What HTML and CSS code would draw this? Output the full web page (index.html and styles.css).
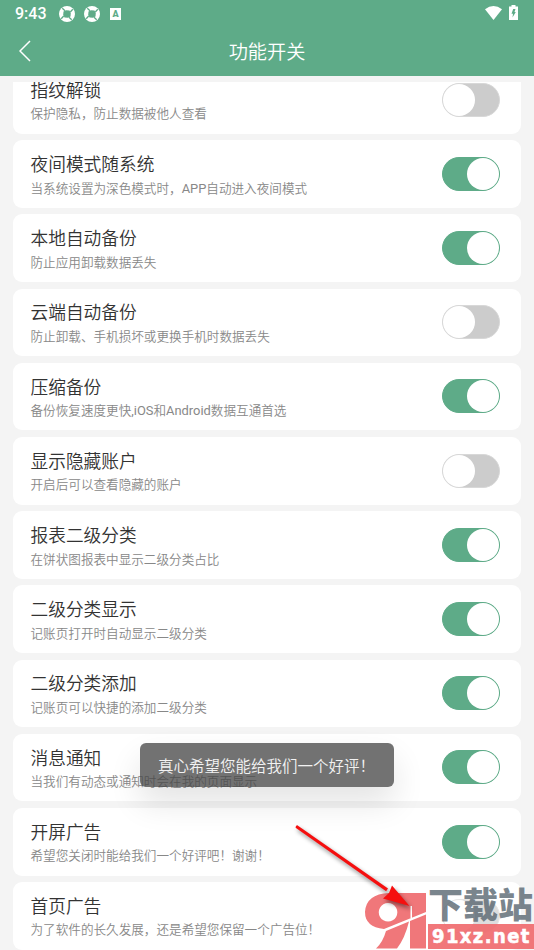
FILE: index.html
```html
<!DOCTYPE html>
<html lang="zh-CN">
<head>
<meta charset="utf-8">
<title>功能开关</title>
<link rel="stylesheet" href="styles.css">
</head>
<body>
<div class="screen">
  <header class="header">
    <div class="status">
      <span class="time">9:43</span>
      <svg class="ball" viewBox="0 0 16 16"><circle cx="8" cy="8" r="8" fill="#fff"/><path d="M7 4.200 10.500 4.500 11.800 7 11.500 10.500 9 11.800 5.500 11.500 4.200 9 4.500 5.500z" fill="#5eab88"/><path d="M3.300 2.200 6 4.700M13.800 3.300 11.300 6M12.700 13.800 10 11.300M2.200 12.700 4.700 10" stroke="#5eab88" stroke-width="1.300"/></svg>
      <svg class="ball" viewBox="0 0 16 16"><circle cx="8" cy="8" r="8" fill="#fff"/><path d="M7 4.200 10.500 4.500 11.800 7 11.500 10.500 9 11.800 5.500 11.500 4.200 9 4.500 5.500z" fill="#5eab88"/><path d="M3.300 2.200 6 4.700M13.800 3.300 11.300 6M12.700 13.800 10 11.300M2.200 12.700 4.700 10" stroke="#5eab88" stroke-width="1.300"/></svg>
      <span class="badge">A</span>
      <svg class="wifi" viewBox="0 0 17 14"><path d="M0 3.200Q8.500-3.200 17 3.200L8.500 14z" fill="#fff"/></svg>
      <svg class="battery" viewBox="0 0 9 15"><path d="M2.500 0h4v1.500H9V15H0V1.500h2.500z" fill="#fff"/><path d="M4.200 4h2.300L5.500 7h1.300L3.500 12.500 4 8.800H2.500z" fill="#5eab88"/></svg>
    </div>
    <div class="nav">
      <svg class="back" viewBox="0 0 12 22"><path d="M11 1 1 11l10 10" fill="none" stroke="#fff" stroke-width="1.500"/></svg>
      <h1>功能开关</h1>
    </div>
  </header>
  <main class="viewport">
    <div class="list">
      <section class="card"><div><h2>指纹解锁</h2><p>保护隐私，防止数据被他人查看</p></div><i class="switch"></i></section>
      <section class="card"><div><h2>夜间模式随系统</h2><p>当系统设置为深色模式时，<span class="latin">APP</span>自动进入夜间模式</p></div><i class="switch on"></i></section>
      <section class="card"><div><h2>本地自动备份</h2><p>防止应用卸载数据丢失</p></div><i class="switch on"></i></section>
      <section class="card"><div><h2>云端自动备份</h2><p>防止卸载、手机损坏或更换手机时数据丢失</p></div><i class="switch"></i></section>
      <section class="card"><div><h2>压缩备份</h2><p>备份恢复速度更快<span class="latin">,iOS</span>和<span class="latin">Android</span>数据互通首选</p></div><i class="switch on"></i></section>
      <section class="card"><div><h2>显示隐藏账户</h2><p>开启后可以查看隐藏的账户</p></div><i class="switch"></i></section>
      <section class="card"><div><h2>报表二级分类</h2><p>在饼状图报表中显示二级分类占比</p></div><i class="switch on"></i></section>
      <section class="card"><div><h2>二级分类显示</h2><p>记账页打开时自动显示二级分类</p></div><i class="switch on"></i></section>
      <section class="card"><div><h2>二级分类添加</h2><p>记账页可以快捷的添加二级分类</p></div><i class="switch on"></i></section>
      <section class="card"><div><h2>消息通知</h2><p>当我们有动态或通知时会在我的页面显示</p></div><i class="switch on"></i></section>
      <section class="card"><div><h2>开屏广告</h2><p>希望您关闭时能给我们一个好评吧！谢谢！</p></div><i class="switch on"></i></section>
      <section class="card"><div><h2>首页广告</h2><p>为了软件的长久发展，还是希望您保留一个广告位！</p></div><i class="switch faded"></i></section>
    </div>
  </main>
  <div class="toast">真心希望您能给我们一个好评！</div>
  <div class="watermark">
    <svg class="mark" viewBox="0 0 62 58">
      <path fill="#f0777a" fill-rule="evenodd" d="M25 1H62V20L20 37Q1 35 1 20 2 2 25 1zM24 11a9.300 9.300 0 1 0 .1 0z"/>
      <path d="M22 39 45 29.500Q41 46 33 56.500H12Q19 50 22 39zM46 29 62 22.500v34H46z" fill="#f0777a"/>
      <path d="M46.500 14h1.500v12h-1.500z" fill="#fff"/>
    </svg>
    <div class="site"><span class="name">下载站</span><span class="url">91xz.net</span></div>
  </div>
  <svg class="arrow" viewBox="0 0 130 100"><g fill="#f50f0f"><path d="M6.300 6.200 97 69.500l-1.900 2.700L4.600 8.700Q4.500 6 6.300 6.200z"/><path d="M101 66.500 118.500 87 92 79.500 98 74z"/></g></svg>
</div>
</body>
</html>
```
FILE: styles.css
```css
* { box-sizing: border-box; margin: 0; padding: 0; }
body {
  background: #f4f4f4;
  font-family: Roboto, "Noto Sans CJK SC", sans-serif;
  overflow: hidden;
}
.screen {
  position: relative;
  width: 534px;
  height: 950px;
  overflow: hidden;
  display: flex;
  flex-direction: column;
}
.header { height: 76px; background: #5eab88; color: #fff; flex: none; }
.status { height: 27px; display: flex; align-items: center; padding: 0 16px 0 15px; }
.time { font-size: 16px; font-weight: 500; width: 44px; line-height: 27px; }
.ball { width: 16px; height: 16px; margin-right: 9px; }
.badge {
  width: 11px;
  height: 12px;
  margin-left: 1px;
  background: #fff;
  color: #5eab88;
  font-size: 9px;
  font-weight: 900;
  line-height: 12px;
  text-align: center;
}
.wifi { width: 17px; height: 14px; margin: -1px 7px 0 auto; }
.battery { width: 9px; height: 15px; margin-top: -2px; }
.nav { height: 49px; display: grid; grid-template-columns: 40px 1fr 40px; align-items: center; }
.back { width: 12px; height: 22px; margin: -1px 0 0 19px; }
h1 { font-size: 19.200px; line-height: 28px; font-weight: 350; text-align: center; padding-top: 2px; }
.viewport { margin-top: 6px; height: 868px; overflow: hidden; }
.list {
  margin: -16px 13px 0;
  display: flex;
  flex-direction: column;
  gap: 6.500px;
}
.card {
  height: 67.700px;
  flex: none;
  background: #fff;
  border-radius: 9px;
  padding: 0 20.600px 0 17.500px;
  display: flex;
  align-items: center;
  justify-content: space-between;
}
.card > div { padding-top: 1.600px; }
h2 { font-size: 17.700px; line-height: 26px; font-weight: 350; color: #333; }
p { font-size: 12.600px; line-height: 19px; font-weight: 350; color: #888; padding-top: .5px; }
.latin { font-weight: 400; font-size: 12.900px; }
.switch {
  width: 58px;
  height: 34px;
  margin-top: -.3px;
  border-radius: 17px;
  background: #ccc;
  border: 1px solid #d8d8d8;
  display: flex;
}
.switch::before {
  content: "";
  width: 32px;
  height: 32px;
  border-radius: 50%;
  background: #fff;
}
.switch.on { background: #5eab88; border-color: #5eab88; justify-content: flex-end; }
.switch.faded { opacity: .65; }
.toast {
  position: absolute;
  left: 140px;
  top: 743px;
  width: 254px;
  height: 44px;
  padding-left: 18px;
  border-radius: 6px;
  background: rgba(70, 70, 70, .76);
  box-shadow: 0 16px 32px rgba(0, 0, 0, .11);
  color: #f2f2f2;
  font-size: 15.500px;
  font-weight: 350;
  line-height: 48px;
  white-space: nowrap;
}
.watermark { position: absolute; left: 364px; top: 892px; display: flex; }
.mark { width: 62px; height: 58px; }
.site { width: 108px; margin-left: 2px; display: flex; flex-direction: column; }
.name {
  height: 32px;
  font-size: 35px;
  font-weight: 800;
  line-height: 30px;
  color: rgba(92, 105, 115, .82);
  white-space: nowrap;
}
.url {
  height: 25px;
  background: rgba(239, 104, 108, .9);
  color: #fff;
  font: bold 20px/25px "DejaVu Sans Condensed", "DejaVu Sans", sans-serif;
  letter-spacing: 1.400px;
  padding-left: 4px;
  -webkit-text-stroke: .5px #fff;
}
.arrow {
  position: absolute;
  left: 291px;
  top: 819px;
  width: 130px;
  height: 100px;
  filter: drop-shadow(2px 3px 2px rgba(0, 0, 0, .45));
}
```
